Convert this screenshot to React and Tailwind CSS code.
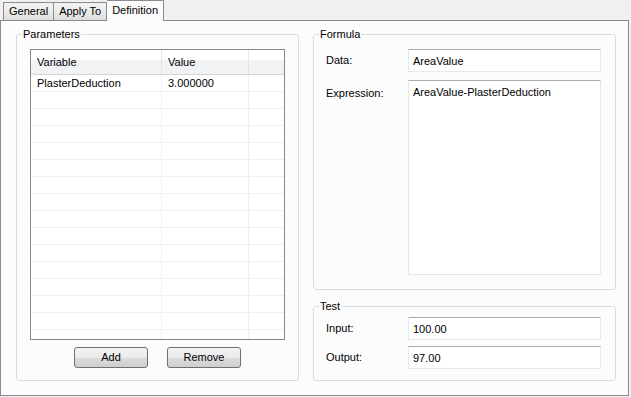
import React from 'react';

const rows = [
  { variable: 'PlasterDeduction', value: '3.000000' },
  ...Array.from({ length: 15 }, () => ({ variable: '', value: '' })),
];

const btn =
  'w-[74px] h-[21px] border border-[#707070] rounded-[3px] bg-[linear-gradient(#f2f2f2,#ebebeb_50%,#dddddd_50%,#cfcfcf)] text-black';

const field =
  'h-[23px] w-[193px] border border-[#e3e9ef] border-t-[#abadb3] bg-white px-[4px] text-black outline-none';

const GroupBox = ({ title, className, legendClass, children }) => (
  <fieldset className={`border border-[#d5dfe5] rounded-[3px] ${className}`}>
    <legend className={`px-[1px] leading-[14px] ${legendClass}`}>{title}</legend>
    {children}
  </fieldset>
);

const App = () => {
  return (
    <div
      className="w-[631px] h-[397px] bg-[#f0f0f0] text-[11px] text-black overflow-hidden"
      style={{ fontFamily: '"Liberation Sans", Arial, sans-serif' }}
    >
      {/* tabs */}
      <div className="flex items-end h-[20px] pl-[3px]">
        <div className="h-[18px] px-[5px] flex items-center border border-b-0 border-[#898c95] bg-[linear-gradient(#f3f3f3,#ebebeb_50%,#dddddd)]">
          General
        </div>
        <div className="h-[18px] px-[5px] flex items-center border border-b-0 border-l-0 border-[#898c95] bg-[linear-gradient(#f3f3f3,#ebebeb_50%,#dddddd)]">
          Apply To
        </div>
        <div className="relative z-10 h-[21px] -mb-px px-[5px] pb-[2px] flex items-center border border-b-0 border-l-0 border-[#898c95] bg-[#fcfcfd]">
          Definition
        </div>
      </div>

      {/* page */}
      <div className="w-[629px] h-[376px] border border-[#898c95] bg-[#fcfcfd] flex gap-[14px] pl-[15px] pt-[6px]">
        <GroupBox
          title="Parameters"
          legendClass="-ml-[8px]"
          className="w-[283px] h-[354px] px-[13px] pt-[8px] flex flex-col"
        >
          <div className="h-[291px] border border-[#828790] bg-white overflow-hidden">
            <div className="flex h-[25px] border-b border-[#d5d5d5] bg-[linear-gradient(#ffffff,#ffffff_40%,#f1f2f4_40%,#f1f2f4)]">
              <div className="w-[131px] pl-[6px] flex items-center border-r border-[#e3e4e6]">Variable</div>
              <div className="w-[87px] pl-[6px] flex items-center border-r border-[#e3e4e6]">Value</div>
              <div className="flex-1" />
            </div>
            {rows.map((r, i) => (
              <div key={i} className="flex h-[17px] border-b border-[#f0f0f0]">
                <div className="w-[131px] pl-[6px] flex items-center border-r border-[#f0f0f0]">{r.variable}</div>
                <div className="w-[87px] pl-[6px] flex items-center border-r border-[#f0f0f0]">{r.value}</div>
                <div className="flex-1" />
              </div>
            ))}
          </div>
          <div className="flex justify-center gap-[19px] mt-[7px]">
            <button className={btn}>Add</button>
            <button className={btn}>Remove</button>
          </div>
        </GroupBox>

        <div className="flex flex-col gap-[9px]">
          <GroupBox
            title="Formula"
            legendClass="-ml-[7px]"
            className="w-[303px] h-[263px] pl-[12px] pt-[8px]"
          >
            <div className="flex items-center">
              <div className="w-[82px]">Data:</div>
              <input readOnly value="AreaValue" className={field} />
            </div>
            <div className="flex mt-[8px]">
              <div className="w-[82px] pt-[5px]">Expression:</div>
              <textarea
                readOnly
                value="AreaValue-PlasterDeduction"
                className="h-[195px] w-[193px] resize-none border border-[#e3e9ef] border-t-[#abadb3] bg-white px-[4px] pt-[4px] leading-[14px] text-black outline-none"
              />
            </div>
          </GroupBox>

          <GroupBox
            title="Test"
            legendClass="-ml-[7px]"
            className="w-[303px] h-[82px] pl-[12px] pt-[4px]"
          >
            <div className="flex items-center">
              <div className="w-[82px]">Input:</div>
              <input readOnly value="100.00" className={field} />
            </div>
            <div className="flex items-center mt-[6px]">
              <div className="w-[82px]">Output:</div>
              <input readOnly value="97.00" className={field} />
            </div>
          </GroupBox>
        </div>
      </div>
    </div>
  );
};

export default App;
